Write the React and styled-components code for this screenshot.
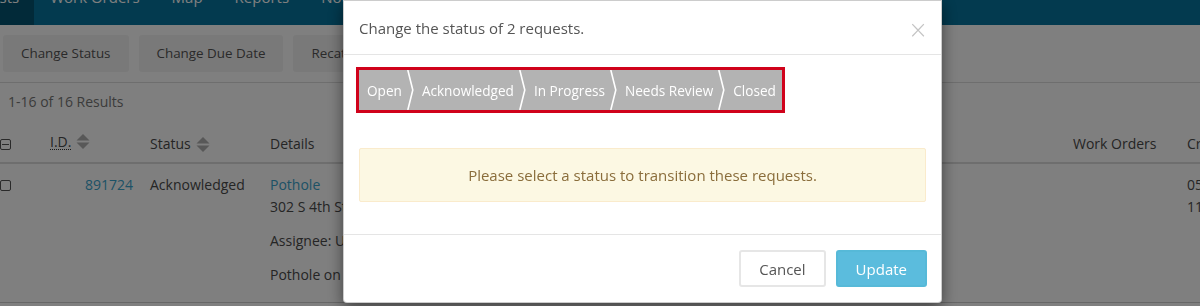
import React from "react";
import styled, { createGlobalStyle } from "styled-components";

const GlobalStyle = createGlobalStyle`
	html, body {
		margin: 0;
		padding: 0;
		background: #fff;
		overflow: hidden;
	}
	body {
		font-family: "Open Sans", "Noto Sans", sans-serif;
		font-size: 14px;
		color: #4a4a4a;
	}
	* {
		box-sizing: border-box;
	}
`;

const Page = styled.div`
	width: 1200px;
	height: 306px;
	overflow: hidden;
`;

const Nav = styled.div`
	display: flex;
	height: 25px;
	background-color: #06749e;
	overflow: hidden;
`;

const NavItem = styled.div`
	padding: 0 ${({ active }) => (active ? "15px" : "16px")} 0 16px;
	height: 25px;
	color: #fff;
	font-size: 15px;
	line-height: 20px;
	white-space: nowrap;
	background: ${({ active }) => (active ? "#045572" : "transparent")};
	margin-left: ${({ active }) => (active ? "-61px" : "0")};
	span {
		display: block;
		margin-top: -13px;
	}
`;

const Toolbar = styled.div`
	display: flex;
	gap: 10px;
	padding: 10px 3px;
	border-bottom: 1px solid #dcdcdc;
`;

const ToolButton = styled.div`
	height: 37px;
	line-height: 37px;
	padding: 0 18px;
	background: #f3f3f3;
	border-radius: 3px;
	color: #555;
	font-size: 13.4px;
	white-space: nowrap;
`;

const Results = styled.div`
	padding: 8px 8px 11px;
	line-height: 22px;
	font-size: 14px;
	color: #777;
`;

const Row = styled.div`
	display: grid;
	grid-template-columns: 42px 100px 120px 803px 114px 120px;
	border-bottom: ${({ head }) => (head ? "2px solid #dcdcdc" : "1px solid #cfcfcf")};
`;

const Cell = styled.div`
	padding: ${({ head }) => (head ? "9px 8px 7px" : "10px 8px 16px")};
	line-height: 22px;
	font-size: 14px;
	color: #4a4a4a;
	white-space: nowrap;
	display: flex;
	flex-direction: column;
	align-items: ${({ right }) => (right ? "flex-end" : "flex-start")};
	padding-right: ${({ right }) => (right ? "9px" : "8px")};
`;

const HeadLabel = styled.span`
	display: inline-flex;
	align-items: center;
	gap: 5px;
`;

const Abbr = styled.span`
	border-bottom: 1px dotted #333;
	line-height: 15px;
`;

const Link = styled.span`
	color: #3aa4cc;
`;

const Para = styled.div`
	margin-top: ${({ gap }) => (gap ? "12px" : "0")};
`;

const CheckBox = styled.span`
	display: inline-block;
	width: 11px;
	height: 11px;
	margin: 6px 0 0 -8px;
	border: 1.5px solid #555;
	border-radius: 2px;
	&::after {
		content: "";
		display: ${({ minus }) => (minus ? "block" : "none")};
		margin: 3.5px 1px 0;
		height: 1.5px;
		background: #555;
	}
`;

const Overlay = styled.div`
	position: fixed;
	inset: 0;
	background: rgba(0, 0, 0, 0.5);
`;

const Modal = styled.div`
	position: fixed;
	top: 0;
	left: 343px;
	width: 599px;
	height: 303px;
	background: #fff;
	border: 1px solid rgba(0, 0, 0, 0.2);
	border-radius: 0 0 4px 4px;
	box-shadow: 0 5px 15px rgba(0, 0, 0, 0.5);
	display: flex;
	flex-direction: column;
`;

const ModalHeader = styled.div`
	height: 54px;
	padding: 0 15px;
	display: flex;
	align-items: center;
	justify-content: space-between;
	border-bottom: 1px solid #e5e5e5;
`;

const Title = styled.div`
	font-size: 15px;
	color: #555;
	margin-top: 1px;
`;

const Close = styled.span`
	font-size: 24px;
	line-height: 1;
	color: #c4c4c4;
	margin: 4px -2px 0 0;
	font-family: "DejaVu Sans", sans-serif;
	font-weight: 300;
`;

const ModalBody = styled.div`
	padding: 15px 15px 0;
`;

const StepperWrap = styled.div`
	display: inline-flex;
	outline: 3px solid #d0021b;
	margin-bottom: 38px;
`;

const Stepper = styled.div`
	display: flex;
	height: 40px;
	background: #b3b3b3;
`;

const Step = styled.div`
	display: flex;
	align-items: center;
	padding: 0 ${({ last }) => (last ? "6px" : "5px")} 0 8px;
	color: #fff;
	font-size: 13.6px;
	white-space: nowrap;
`;

const Alert = styled.div`
	margin-bottom: 32px;
	height: 54px;
	display: flex;
	align-items: center;
	justify-content: center;
	background: #fcf8e3;
	border: 1px solid #faebcc;
	border-radius: 2px;
	color: #8a6d3b;
	font-size: 15px;
`;

const ModalFooter = styled.div`
	border-top: 1px solid #e5e5e5;
	padding: 15px 14px 15px 15px;
	display: flex;
	justify-content: flex-end;
	gap: 10px;
`;

const Button = styled.div`
	height: 37px;
	line-height: 35px;
	padding: 0 18px;
	border-radius: 3px;
	font-size: 15px;
	border: 2px solid ${({ primary }) => (primary ? "#56b9d8" : "#e6e6e6")};
	background: ${({ primary }) => (primary ? "#5bbcdd" : "#fff")};
	color: ${({ primary }) => (primary ? "#fff" : "#555")};
`;

const SortArrows = () => (
	<svg width="14" height="17" viewBox="0 0 14 17">
		<path d="M0.5 7.5 L7 1 L13.5 7.5 Z" fill="#b0b0b0" />
		<path d="M0.5 9.5 L7 16 L13.5 9.5 Z" fill="#b0b0b0" />
	</svg>
);

const Chevron = () => (
	<svg width="7" height="40" viewBox="0 0 7 40">
		<polyline
			points="0.8,0 5.8,20 0.8,40"
			fill="none"
			stroke="#fff"
			strokeWidth="1.6"
		/>
	</svg>
);

const steps = ["Open", "Acknowledged", "In Progress", "Needs Review", "Closed"];

const Background = () => (
	<Page>
		<Nav>
			<NavItem active>
				<span>Requests</span>
			</NavItem>
			<NavItem>
				<span>Work Orders</span>
			</NavItem>
			<NavItem>
				<span>Map</span>
			</NavItem>
			<NavItem>
				<span>Reports</span>
			</NavItem>
			<NavItem>
				<span>Notifications</span>
			</NavItem>
		</Nav>
		<Toolbar>
			<ToolButton>Change Status</ToolButton>
			<ToolButton>Change Due Date</ToolButton>
			<ToolButton>Recategorize</ToolButton>
		</Toolbar>
		<Results>1-16 of 16 Results</Results>
		<Row head>
			<Cell head>
				<CheckBox minus />
			</Cell>
			<Cell head>
				<HeadLabel>
					<Abbr>I.D.</Abbr>
					<SortArrows />
				</HeadLabel>
			</Cell>
			<Cell head>
				<HeadLabel>
					Status
					<SortArrows />
				</HeadLabel>
			</Cell>
			<Cell head>Details</Cell>
			<Cell head>Work Orders</Cell>
			<Cell head>Created</Cell>
		</Row>
		<Row>
			<Cell>
				<CheckBox />
			</Cell>
			<Cell right>
				<Link>891724</Link>
			</Cell>
			<Cell>Acknowledged</Cell>
			<Cell>
				<Link>Pothole</Link>
				<Para>302 S 4th St</Para>
				<Para gap>Assignee: Unassigned</Para>
				<Para gap>Pothole on the corner</Para>
			</Cell>
			<Cell />
			<Cell>
				<Para>05/14/2019</Para>
				<Para>11:02 AM</Para>
			</Cell>
		</Row>
	</Page>
);

export default function App() {
	return (
		<>
			<GlobalStyle />
			<Background />
			<Overlay />
			<Modal>
				<ModalHeader>
					<Title>Change the status of 2 requests.</Title>
					<Close>×</Close>
				</ModalHeader>
				<ModalBody>
					<StepperWrap>
						<Stepper>
							{steps.map((s, i) => (
								<React.Fragment key={s}>
									<Step last={i === steps.length - 1}>{s}</Step>
									{i < steps.length - 1 && <Chevron />}
								</React.Fragment>
							))}
						</Stepper>
					</StepperWrap>
					<Alert>Please select a status to transition these requests.</Alert>
				</ModalBody>
				<ModalFooter>
					<Button>Cancel</Button>
					<Button primary>Update</Button>
				</ModalFooter>
			</Modal>
		</>
	);
}
